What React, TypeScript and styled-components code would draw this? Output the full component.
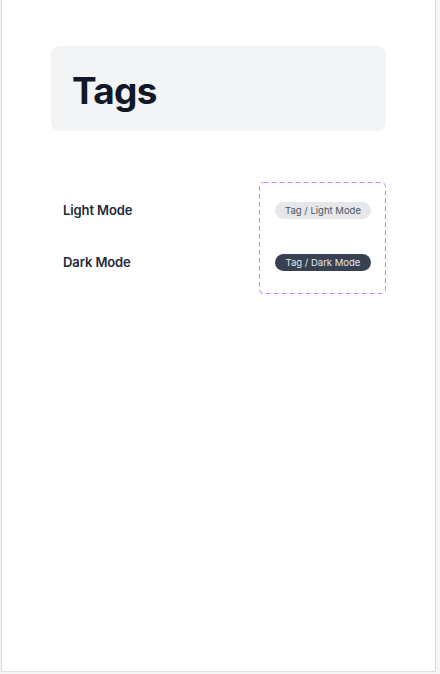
import styled, { createGlobalStyle } from "styled-components";

const GlobalStyle = createGlobalStyle`
  html, body {
    margin: 0;
    padding: 0;
    background: #f7f7f7;
  }
  body {
    font-family: Inter, "Noto Sans", sans-serif;
  }
`;

const Frame = styled.div`
  box-sizing: border-box;
  width: 435px;
  height: 672px;
  margin-left: 1px;
  background: #ffffff;
  border: 1px solid #dedede;
  border-top: none;
  box-shadow: 0 0 2px rgba(0, 0, 0, 0.08);
  padding: 46px 49px 0 49px;
`;

const Header = styled.div`
  height: 85px;
  background: #f3f4f6;
  border-radius: 8px;
  display: flex;
  align-items: center;
  padding-left: 21px;
`;

const Title = styled.h1`
  margin: 0;
  padding-top: 3px;
  font-size: 37px;
  font-weight: 700;
  letter-spacing: -0.7px;
  color: #111827;
`;

const Section = styled.div`
  display: flex;
  justify-content: space-between;
  margin-top: 51px;
`;

const Labels = styled.div`
  display: flex;
  flex-direction: column;
  padding: 2px 0 0 12px;
`;

const Row = styled.div`
  height: 52px;
  display: flex;
  align-items: center;
`;

const Label = styled.span`
  font-size: 13px;
  font-weight: 600;
  letter-spacing: -0.1px;
  color: #1f2937;
`;

const DashedBox = styled.div`
  position: relative;
  box-sizing: border-box;
  width: 127px;
  display: flex;
  flex-direction: column;
  padding: 2px 15px 6px 16px;
  border-radius: 4px;
`;

const DashOutline = styled.svg`
  position: absolute;
  inset: 0;
  width: 100%;
  height: 100%;
  pointer-events: none;
  overflow: visible;
`;

const Tag = styled.span<{ $dark?: boolean }>`
  box-sizing: border-box;
  width: 96px;
  height: 17px;
  display: flex;
  align-items: center;
  justify-content: center;
  border-radius: 9px;
  font-size: 9.5px;
  background: ${(p) => (p.$dark ? "#374151" : "#e5e7eb")};
  color: ${(p) => (p.$dark ? "#e5e7eb" : "#4b5563")};
`;

const modes = [
  { label: "Light Mode", tag: "Tag / Light Mode", dark: false },
  { label: "Dark Mode", tag: "Tag / Dark Mode", dark: true },
];

export default function App() {
  return (
    <>
      <GlobalStyle />
      <Frame>
        <Header>
          <Title>Tags</Title>
        </Header>
        <Section>
          <Labels>
            {modes.map((m) => (
              <Row key={m.label}>
                <Label>{m.label}</Label>
              </Row>
            ))}
          </Labels>
          <DashedBox>
            <DashOutline>
              <rect
                x="0.5"
                y="0.5"
                width="calc(100% - 1px)"
                height="calc(100% - 1px)"
                rx="4"
                fill="none"
                stroke="#c084fc"
                strokeWidth="1"
                strokeDasharray="5 3"
              />
            </DashOutline>
            {modes.map((m) => (
              <Row key={m.tag}>
                <Tag $dark={m.dark}>{m.tag}</Tag>
              </Row>
            ))}
          </DashedBox>
        </Section>
      </Frame>
    </>
  );
}
